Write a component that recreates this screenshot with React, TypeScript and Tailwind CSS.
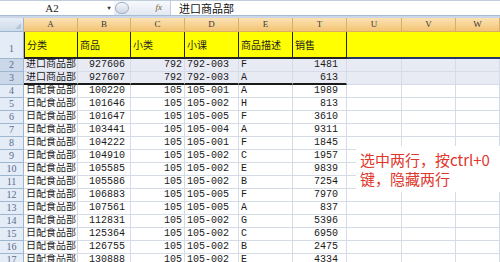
import React from 'react';

const cols = [
  { key: 'A', w: 'w-[54px]' },
  { key: 'B', w: 'w-[53px]' },
  { key: 'C', w: 'w-[54px]' },
  { key: 'D', w: 'w-[54px]' },
  { key: 'E', w: 'w-[54px]' },
  { key: 'T', w: 'w-[54px]' },
  { key: 'U', w: 'w-[55px]' },
  { key: 'V', w: 'w-[54px]' },
  { key: 'W', w: 'w-[44px]' },
];

const heads = ['分类', '商品', '小类', '小课', '商品描述', '销售'];

const rows: [string, string, string, string, string, string][] = [
  ['进口商品部', '927606', '792', '792-003', 'F', '1481'],
  ['进口商品部', '927607', '792', '792-003', 'A', '613'],
  ['日配食品部', '100220', '105', '105-001', 'A', '1989'],
  ['日配食品部', '101646', '105', '105-002', 'H', '813'],
  ['日配食品部', '101647', '105', '105-005', 'F', '3610'],
  ['日配食品部', '103441', '105', '105-004', 'A', '9311'],
  ['日配食品部', '104222', '105', '105-001', 'F', '1845'],
  ['日配食品部', '104910', '105', '105-002', 'C', '1957'],
  ['日配食品部', '105585', '105', '105-002', 'E', '9839'],
  ['日配食品部', '105586', '105', '105-002', 'B', '7254'],
  ['日配食品部', '106883', '105', '105-005', 'F', '7970'],
  ['日配食品部', '107561', '105', '105-005', 'A', '837'],
  ['日配食品部', '112831', '105', '105-002', 'G', '5396'],
  ['日配食品部', '125364', '105', '105-002', 'C', '6950'],
  ['日配食品部', '126755', '105', '105-002', 'B', '2475'],
  ['日配食品部', '130888', '105', '105-002', 'E', '4334'],
];

export default function App() {
  return (
    <div className="w-[500px] h-[262px] overflow-hidden bg-white relative font-['Liberation_Mono','Noto_Sans_CJK_SC',monospace] text-[10px] text-[#1a1a1a]">
      {/* formula bar */}
      <div className="h-[15px] flex items-stretch bg-white border-t border-[#c2cddc]">
        <div className="w-[104px] flex items-center justify-center text-[#222] font-['Liberation_Serif',serif] text-[11px]">A2</div>
        <div className="w-[10px] flex items-center justify-center text-[6px] text-[#333]">▼</div>
        <div className="w-[56px] flex items-center bg-gradient-to-b from-[#f7f9fc] to-[#e3e9f2] relative">
          <div className="w-[14px] h-[12px] rounded-full border border-[#9fb0c8] bg-gradient-to-b from-[#f5f7fa] to-[#cdd6e2] ml-[1px]" />
          <div className="ml-auto mr-[8px] font-['Liberation_Serif',serif] italic text-[9px] text-[#6b5a2a]">fx</div>
        </div>
        <div className="flex-1 flex items-center pl-[8px] border-l border-[#c2cddc] font-['Noto_Sans_CJK_SC',sans-serif] text-[11px] text-[#111]">进口商品部</div>
      </div>
      <div className="h-[3px] bg-[#cbd7e8] border-t border-[#a9bcd6]" />

      {/* column header */}
      <div className="h-[14px] flex">
        <div className="w-[24px] bg-gradient-to-b from-[#e6edf6] to-[#cfdbeb] border-r border-b border-[#9eb6ce] relative">
          <div className="absolute right-[2px] bottom-[2px] w-0 h-0 border-l-[6px] border-l-transparent border-b-[6px] border-b-[#b8c6d8]" />
        </div>
        {cols.map((c) => (
          <div
            key={c.key}
            className={`${c.w} shrink-0 flex items-center justify-center bg-gradient-to-b from-[#fbe2b4] to-[#f3c472] border-r border-b border-[#d9ae68] font-['Liberation_Serif',serif] text-[9px] text-[#3a3a3a]`}
          >
            {c.key}
          </div>
        ))}
      </div>

      {/* row 1 */}
      <div className="h-[27px] flex">
        <div className="w-[24px] shrink-0 bg-[#e4ecf7] border-r border-b border-[#9eb6ce] flex items-end justify-center pb-[2px] font-['Liberation_Serif',serif] text-[10px] text-[#5a6d8e]">1</div>
        {cols.map((c, i) => (
          <div
            key={c.key}
            className={`${c.w} shrink-0 bg-[#ffff00] flex items-center pl-[2px] font-['Noto_Sans_CJK_SC',sans-serif] text-[10px] text-[#222] border-b-2 ${i < 6 ? 'border-r border-r-[#222] border-b-[#222]' : 'border-b-[#27356b]'} ${i === 0 ? 'border-l border-l-[#222]' : ''}`}
          >
            {heads[i] ?? ''}
          </div>
        ))}
      </div>

      {/* data rows */}
      {rows.map((r, ri) => {
        const sel = ri < 2;
        const thick = ri === 1;
        return (
          <div key={ri} className="h-[13px] flex leading-[12px]">
            <div className={`w-[24px] shrink-0 border-r border-b border-[#9eb6ce] flex items-center justify-center font-['Liberation_Serif',serif] text-[10px] text-[#5a6d8e] ${sel ? 'bg-[#cbd8ea]' : 'bg-[#e4ecf7]'}`}>
              {ri + 2}
            </div>
            {cols.map((c, ci) => {
              const val = r[ci] ?? '';
              const align =
                ci === 2 ? 'justify-end pr-[2px]' : ci === 5 ? 'justify-end pr-[8px]' : ci === 1 ? 'pl-[11px]' : 'pl-[2px]';
              const bottom = thick && ci < 6 ? 'border-b-2 border-b-[#1a1a1a]' : 'border-b border-b-[#d5dce8]';
              return (
                <div
                  key={c.key}
                  className={`${c.w} shrink-0 flex items-center whitespace-nowrap overflow-hidden border-r border-r-[#d5dce8] ${bottom} ${align} ${sel ? 'bg-[#e9ebf4]' : 'bg-white'}`}
                >
                  {val}
                </div>
              );
            })}
          </div>
        );
      })}

      {/* annotation */}
      <div className="absolute left-[356px] top-[146px] w-[144px] h-[46px] bg-white pl-[4px] pt-[4px] font-['Noto_Sans_CJK_SC',sans-serif] text-[15px] leading-[19px] text-[#e0362c] whitespace-nowrap">
        <div>选中两行，按ctrl+0</div>
        <div>键，隐藏两行</div>
      </div>
    </div>
  );
}
